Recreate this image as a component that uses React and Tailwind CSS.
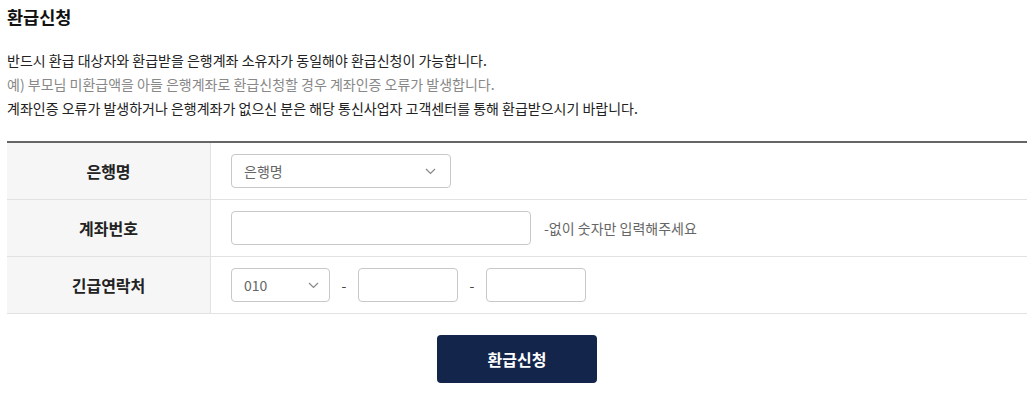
import React from "react";

const font = { fontFamily: '"Noto Sans CJK KR", "Noto Sans", sans-serif' };

function Chevron({ className }) {
  return (
    <svg className={className} width="11" height="7" viewBox="0 0 11 7" fill="none">
      <path d="M1 1l4.5 4.5L10 1" stroke="#888" strokeWidth="1.2" />
    </svg>
  );
}

function Row({ label, children }) {
  return (
    <div className="flex h-[57px] border-b border-[#e2e2e2]">
      <div className="w-[204px] shrink-0 bg-[#f6f6f6] border-r border-[#e2e2e2] flex items-center justify-center text-[16px] font-bold text-[#222]">
        {label}
      </div>
      <div className="flex-1 flex items-center pl-[20px]">{children}</div>
    </div>
  );
}

export default function App() {
  return (
    <div className="bg-white w-[1035px] h-[397px] pl-[7px] pt-[5px]" style={font}>
      <h2 className="text-[17.5px] leading-[24px] font-bold text-[#111]">환급신청</h2>
      <div className="mt-[19px] text-[14px] leading-[24px] text-[#222]">
        <p>반드시 환급 대상자와 환급받을 은행계좌 소유자가 동일해야 환급신청이 가능합니다.</p>
        <p className="text-[#888]">예) 부모님 미환급액을 아들 은행계좌로 환급신청할 경우 계좌인증 오류가 발생합니다.</p>
        <p>계좌인증 오류가 발생하거나 은행계좌가 없으신 분은 해당 통신사업자 고객센터를 통해 환급받으시기 바랍니다.</p>
      </div>
      <div className="mt-[21px] w-[1020px] border-t-2 border-[#666]">
        <Row label="은행명">
          <div className="w-[220px] h-[34px] border border-[#c8c8c8] rounded-[4px] flex items-center justify-between pl-[12px] pr-[14px] text-[14px] text-[#666]">
            <span>은행명</span>
            <Chevron />
          </div>
        </Row>
        <Row label="계좌번호">
          <div className="w-[300px] h-[34px] border border-[#c8c8c8] rounded-[4px]" />
          <span className="ml-[13px] text-[14px] text-[#666]">-없이 숫자만 입력해주세요</span>
        </Row>
        <Row label="긴급연락처">
          <div className="w-[99px] h-[34px] border border-[#c8c8c8] rounded-[4px] flex items-center justify-between pl-[12px] pr-[10px] text-[14px] text-[#666]">
            <span>010</span>
            <Chevron />
          </div>
          <span className="w-[28px] text-center text-[14px] text-[#444]">-</span>
          <div className="w-[100px] h-[34px] border border-[#c8c8c8] rounded-[4px]" />
          <span className="w-[28px] text-center text-[14px] text-[#444]">-</span>
          <div className="w-[100px] h-[34px] border border-[#c8c8c8] rounded-[4px]" />
        </Row>
      </div>
      <div className="w-[1020px] flex justify-center mt-[21px]">
        <button className="w-[160px] h-[48px] rounded-[4px] bg-[#13254b] text-white text-[16px] font-bold">
          환급신청
        </button>
      </div>
    </div>
  );
}
